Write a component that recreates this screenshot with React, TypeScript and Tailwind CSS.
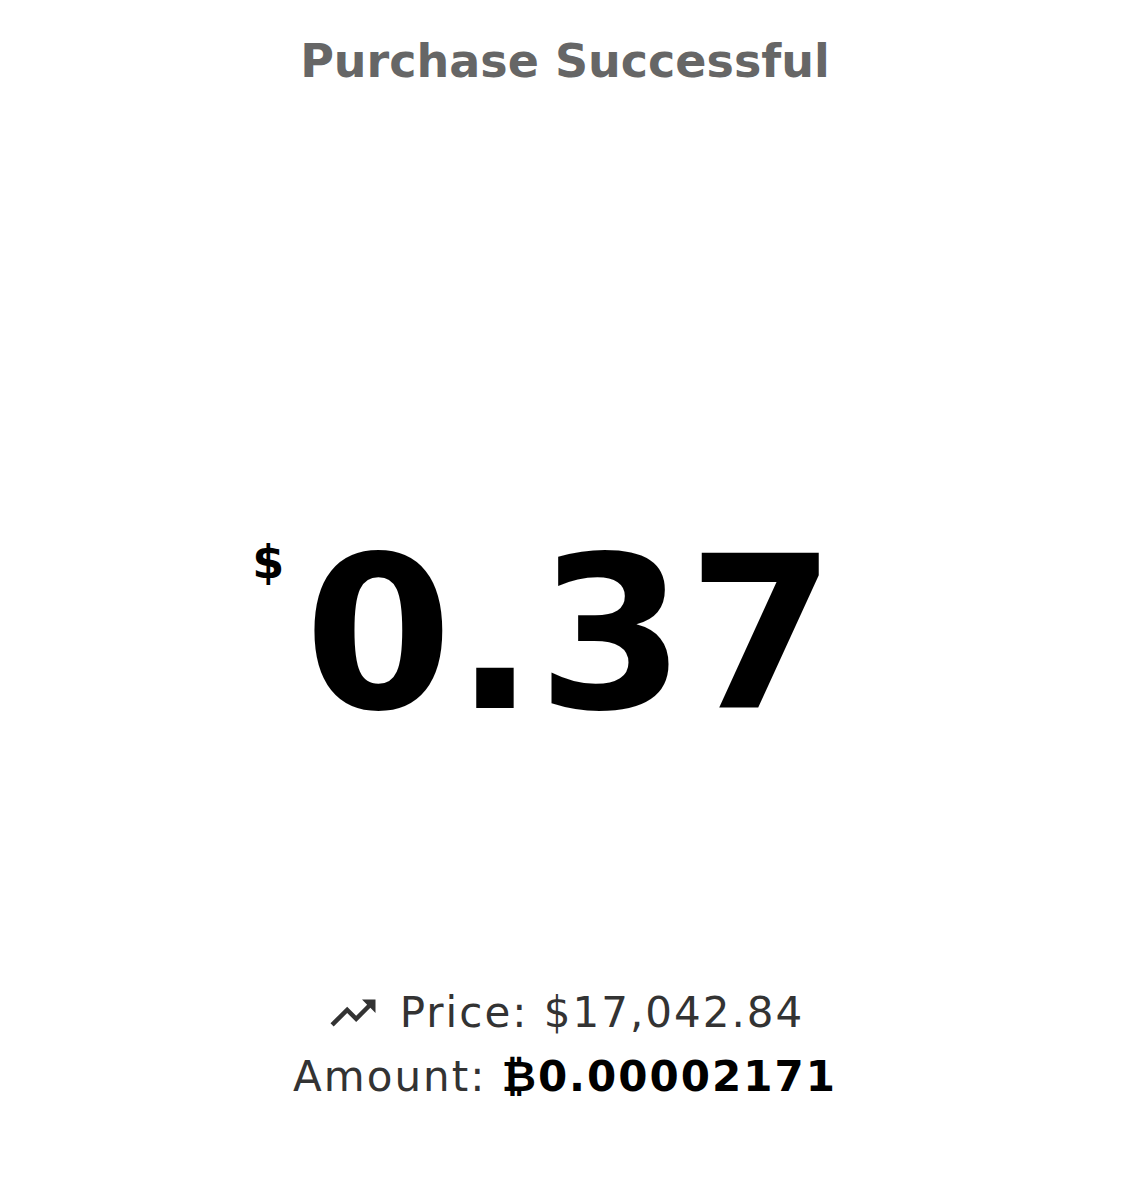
import React from 'react';
import { MdTrendingUp } from 'react-icons/md';

const App: React.FC = () => {
  return (
    <div className="flex h-[1200px] w-full flex-col items-center bg-white font-['DejaVu_Sans',sans-serif]">
      <h1 className="mt-[34px] text-[46px] leading-[54px] font-bold text-[#666666]">
        Purchase Successful
      </h1>

      <div className="mt-[451px] flex items-start pr-[40px] text-black">
        <span className="mt-0 mr-[20px] text-[46px] leading-none font-bold">$</span>
        <span className="text-[213px] leading-[190px] font-bold tracking-[2px]">0.37</span>
      </div>

      <div className="mt-[252px] flex flex-col items-center text-[42px] leading-[64px] tracking-[2px] text-[#333333]">
        <div className="flex items-center">
          <MdTrendingUp className="mr-[20px] text-[54px]" />
          <span>Price: $17,042.84</span>
        </div>
        <div>
          Amount: <span className="font-bold text-black">₿0.00002171</span>
        </div>
      </div>
    </div>
  );
};

export default App;
